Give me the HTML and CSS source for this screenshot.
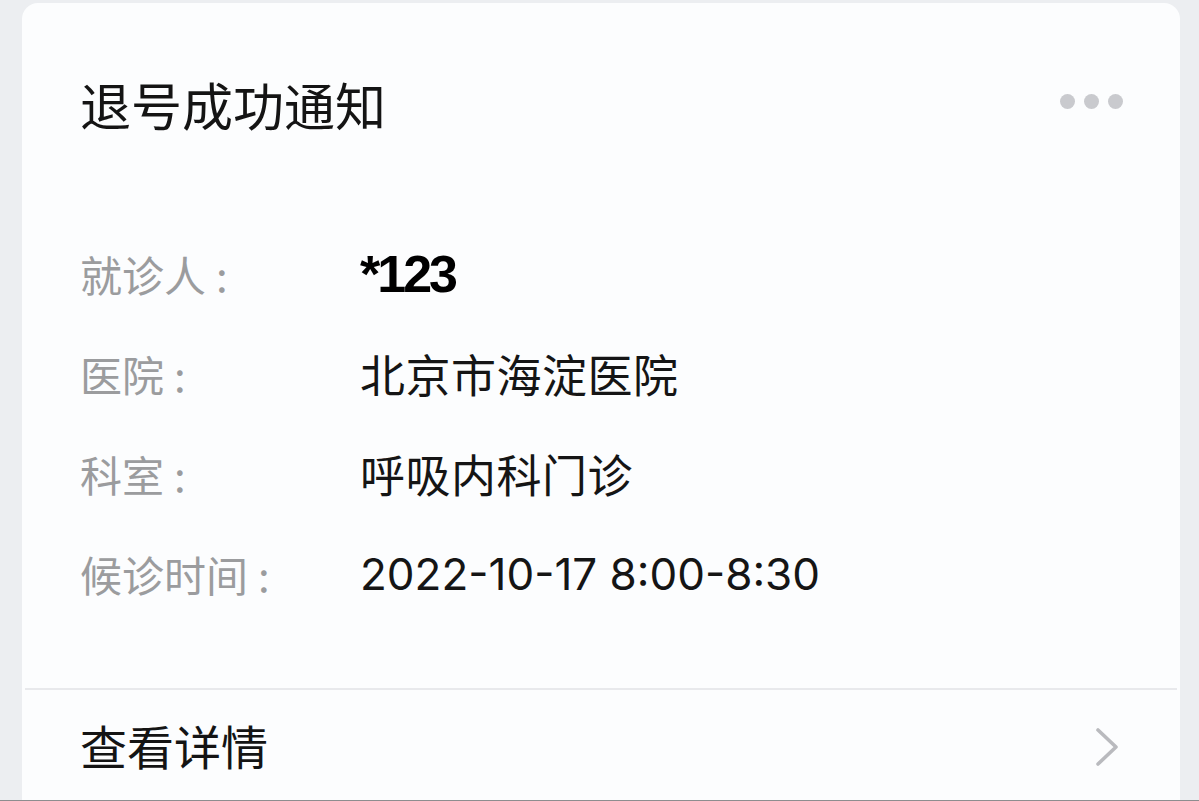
FILE: index.html
```html
<!DOCTYPE html>
<html lang="zh-CN">
<head>
<meta charset="utf-8">
<title>退号成功通知</title>
<link rel="stylesheet" href="styles.css">
</head>
<body>
<div class="card">
  <div class="header">
    <div class="title">退号成功通知</div>
    <div class="more"><span class="dot"></span><span class="dot"></span><span class="dot"></span></div>
  </div>
  <div class="rows">
    <div class="row"><div class="label">就诊人<span class="colon">:</span></div><div class="value name">*123</div></div>
    <div class="row"><div class="label">医院<span class="colon">:</span></div><div class="value">北京市海淀医院</div></div>
    <div class="row"><div class="label">科室<span class="colon">:</span></div><div class="value">呼吸内科门诊</div></div>
    <div class="row"><div class="label">候诊时间<span class="colon">:</span></div><div class="value time">2022-10-17 8:00-8:30</div></div>
  </div>
  <div class="divider"></div>
  <div class="footer">
    <div class="footer-text">查看详情</div>
    <svg class="chevron" width="26" height="40" viewBox="0 0 26 40"><polyline points="4,3 22,20 4,37" fill="none" stroke="#b9babe" stroke-width="3.6" stroke-linecap="round" stroke-linejoin="round"/></svg>
  </div>
</div>
<div class="baseline"></div>
</body>
</html>
```

FILE: styles.css
```css
html, body {
  margin: 0;
  padding: 0;
  height: 100%;
}
body {
  background: #eceef1;
  font-family: "Noto Sans CJK SC", "Noto Sans", sans-serif;
  overflow: hidden;
}
.card {
  margin: 3px 19px 0 22px;
  height: 797px;
  background: #fcfdfe;
  border-radius: 16px 16px 0 0;
  display: flex;
  flex-direction: column;
  box-sizing: border-box;
}
.baseline {
  height: 1px;
  background: #8d8d8f;
}
.header {
  display: flex;
  align-items: center;
  justify-content: space-between;
  padding: 71px 57px 0 58px;
  height: 60px;
}
.title {
  font-size: 51px;
  line-height: 60px;
  color: #141414;
}
.more {
  display: flex;
  gap: 9px;
  margin-top: -6px;
}
.dot {
  width: 15px;
  height: 15px;
  border-radius: 50%;
  background: #c9cace;
}
.rows {
  margin-top: 90px;
  padding-left: 58px;
}
.row {
  display: flex;
  height: 100px;
  align-items: center;
}
.label {
  width: 280px;
  font-size: 42px;
  line-height: 60px;
  color: #9b9c9e;
}
.colon {
  margin-left: 10px;
}
.value {
  font-size: 45px;
  line-height: 60px;
  letter-spacing: 0.5px;
  color: #151515;
}
.value.time {
  font-family: Inter, "Noto Sans CJK SC", sans-serif;
  font-size: 44px;
  letter-spacing: 0;
}
.value.name {
  font-family: "Liberation Sans", Arial, sans-serif;
  font-weight: bold;
  font-size: 52px;
  letter-spacing: -3px;
  color: #000;
}
.divider {
  margin: 64px 3px 0 3px;
  height: 2px;
  background: #e8e9ec;
}
.footer {
  display: flex;
  align-items: center;
  justify-content: space-between;
  padding: 25px 60px 0 58px;
}
.footer-text {
  font-size: 47px;
  line-height: 60px;
  color: #141414;
}
.chevron {
  display: block;
  margin-top: 3px;
}
```
